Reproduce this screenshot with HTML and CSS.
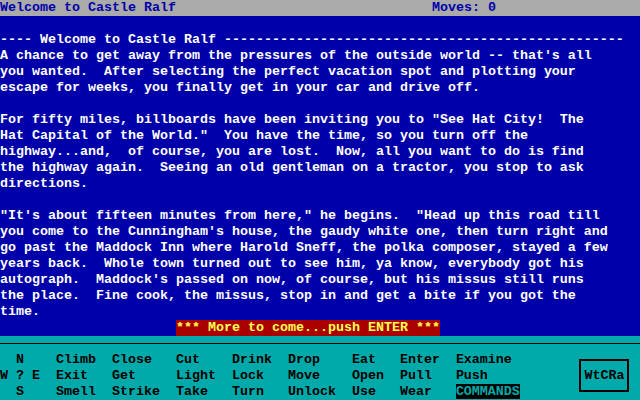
FILE: index.html
```
<!DOCTYPE html>
<html>
<head>
<meta charset="utf-8">
<title>Castle Ralf</title>
<link rel="stylesheet" href="styles.css">
</head>
<body>
<div class="screen">
  <div class="titlebar">
    <span class="title">Welcome to Castle Ralf</span>
    <span class="moves">Moves: 0</span>
  </div>
  <div class="story">
<pre class="text">
---- Welcome to Castle Ralf --------------------------------------------------
A chance to get away from the pressures of the outside world -- that's all
you wanted.  After selecting the perfect vacation spot and plotting your
escape for weeks, you finally get in your car and drive off.

For fifty miles, billboards have been inviting you to "See Hat City!  The
Hat Capital of the World."  You have the time, so you turn off the
highway...and,  of course, you are lost.  Now, all you want to do is find
the highway again.  Seeing an old gentleman on a tractor, you stop to ask
directions.

"It's about fifteen minutes from here," he begins.  "Head up this road till
you come to the Cunningham's house, the gaudy white one, then turn right and
go past the Maddock Inn where Harold Sneff, the polka composer, stayed a few
years back.  Whole town turned out to see him, ya know, everybody got his
autograph.  Maddock's passed on now, of course, but his missus still runs
the place.  Fine cook, the missus, stop in and get a bite if you got the
time.</pre>
    <div class="more">*** More to come...push ENTER ***</div>
  </div>
  <div class="panel">
    <div class="rule"></div>
    <div class="panel-body">
      <div class="menu">
        <div class="compass">
          <span></span><span>N</span><span></span>
          <span>W</span><span>?</span><span>E</span>
          <span></span><span>S</span><span></span>
        </div>
        <span>Climb</span><span>Close</span><span>Cut</span><span>Drink</span><span>Drop</span><span>Eat</span><span>Enter</span><span>Examine</span>
        <span>Exit</span><span>Get</span><span>Light</span><span>Lock</span><span>Move</span><span>Open</span><span>Pull</span><span>Push</span>
        <span>Smell</span><span>Strike</span><span>Take</span><span>Turn</span><span>Unlock</span><span>Use</span><span>Wear</span><span><span class="active">COMMANDS</span></span>
      </div>
      <div class="badge">WtCRa</div>
    </div>
  </div>
</div>
</body>
</html>
```
FILE: styles.css
```
* { box-sizing: border-box; }
html, body {
  margin: 0;
  padding: 0;
  background: #0000aa;
}
.screen {
  width: 640px;
  height: 400px;
  overflow: hidden;
  font-family: "Liberation Mono", "DejaVu Sans Mono", monospace;
  font-size: 13.333px;
  font-weight: bold;
  line-height: 16px;
  display: flex;
  flex-direction: column;
}
.titlebar {
  height: 16px;
  background: #aaaaaa;
  color: #0000aa;
  display: flex;
  white-space: pre;
}
.title { width: 54ch; }
.story {
  height: 320px;
  background: #0000aa;
  color: #ffffff;
  padding-top: 16px;
  display: flex;
  flex-direction: column;
}
.text {
  margin: 0;
  font: inherit;
  line-height: 16px;
  height: 288px;
  white-space: pre;
}
.more {
  margin-left: 22ch;
  width: 33ch;
  height: 16px;
  background: #aa0000;
  color: #ffff55;
  white-space: pre;
}
.panel {
  height: 64px;
  background: #00aaaa;
  color: #000000;
  padding-top: 7px;
}
.rule {
  height: 1px;
  background: #000000;
}
.panel-body {
  display: flex;
  margin-top: 8px;
  height: 48px;
}
.menu {
  display: grid;
  grid-template-columns: 7ch 7ch 8ch 7ch 7ch 8ch 6ch 7ch 9ch;
  grid-template-rows: 16px 16px 16px;
  white-space: pre;
}
.compass {
  grid-row: 1 / 4;
  grid-column: 1;
  display: grid;
  grid-template-columns: 2ch 2ch 1ch;
  grid-template-rows: 16px 16px 16px;
}
.active {
  background: #000000;
  color: #00aaaa;
}
.badge {
  margin-left: auto;
  margin-right: 11px;
  margin-top: 7px;
  width: 50px;
  height: 33px;
  border: 2px solid #000000;
  display: flex;
  align-items: center;
  justify-content: center;
  padding-left: 1px;
}
```
